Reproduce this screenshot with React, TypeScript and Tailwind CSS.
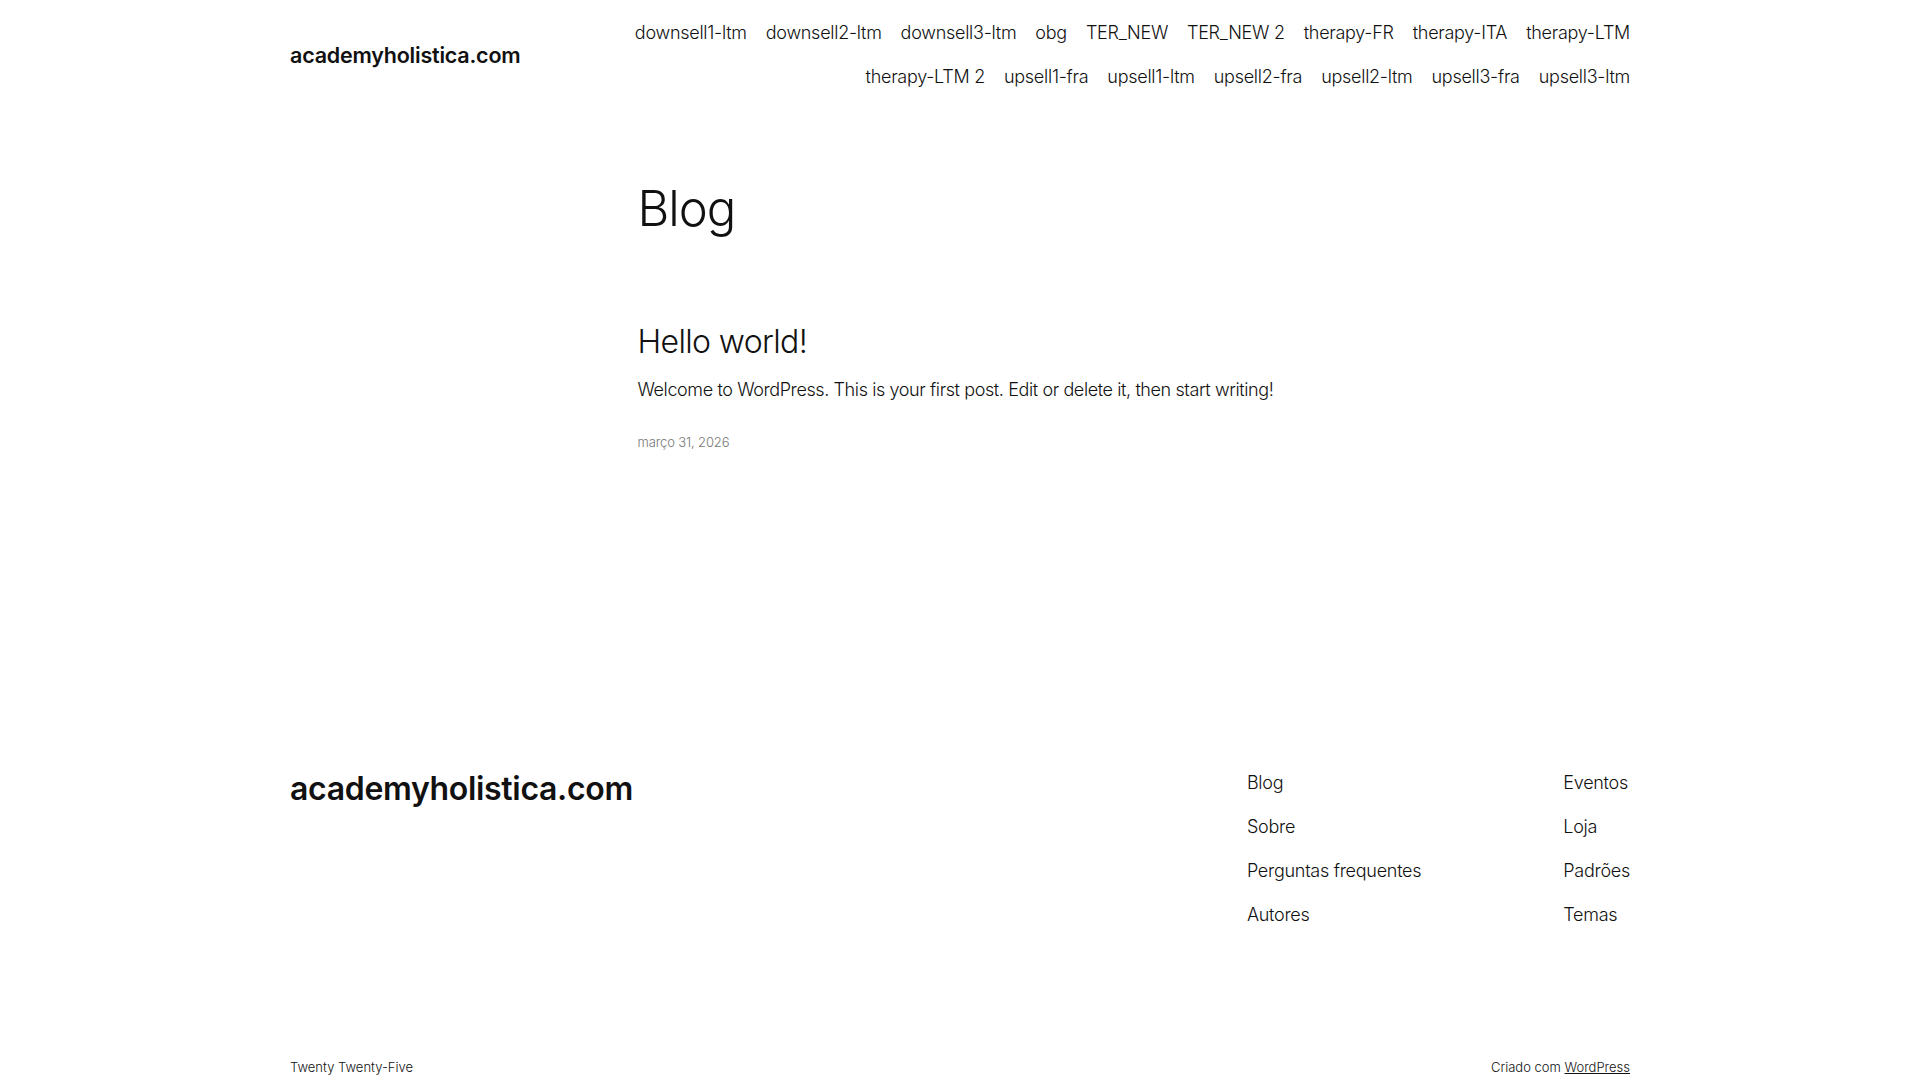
import React from 'react';

const navItems = [
  'downsell1-ltm', 'downsell2-ltm', 'downsell3-ltm', 'obg', 'TER_NEW', 'TER_NEW 2', 'therapy-FR', 'therapy-ITA', 'therapy-LTM',
  'therapy-LTM 2', 'upsell1-fra', 'upsell1-ltm', 'upsell2-fra', 'upsell2-ltm', 'upsell3-fra', 'upsell3-ltm',
];

export default function App() {
  return (
    <div className="min-h-screen bg-white text-[#111111] font-['Inter',sans-serif] flex flex-col">
      {/* header */}
      <header className="mx-auto w-[1340px] flex items-center justify-between pt-[11px]">
        <a href="#" className="text-[21.5px] font-semibold tracking-[-0.01em]">academyholistica.com</a>
        <nav className="w-[1000px] flex flex-wrap justify-end gap-x-[19px] text-[18px] font-light leading-[44px] tracking-[-0.015em]">
          {navItems.map((item) => (
            <a key={item} href="#">{item}</a>
          ))}
        </nav>
      </header>

      {/* main */}
      <main className="mx-auto w-[645px] pt-[81px]">
        <h1 className="text-[49px] font-light leading-[1.2] tracking-[-0.02em]">Blog</h1>
        <article className="mt-[84px]">
          <h2 className="text-[32px] font-light leading-[1.2] tracking-[-0.02em]">Hello world!</h2>
          <p className="mt-[15px] text-[18px] font-light tracking-[-0.022em] whitespace-nowrap">
            Welcome to WordPress. This is your first post. Edit or delete it, then start writing!
          </p>
          <p className="mt-[30px] text-[13px] font-light text-[#777777] tracking-[-0.01em]">março 31, 2026</p>
        </article>
      </main>

      {/* footer */}
      <footer className="mx-auto w-[1340px] mt-[316px]">
        <div className="flex justify-between items-start">
          <a href="#" className="text-[32px] font-semibold tracking-[-0.01em] leading-none mt-[4px]">academyholistica.com</a>
          <div className="flex gap-[142px] text-[18px] font-light leading-[44px] -mt-[8px] tracking-[-0.015em]">
            <div className="flex flex-col">
              <a href="#">Blog</a>
              <a href="#">Sobre</a>
              <a href="#">Perguntas frequentes</a>
              <a href="#">Autores</a>
            </div>
            <div className="flex flex-col">
              <a href="#">Eventos</a>
              <a href="#">Loja</a>
              <a href="#">Padrões</a>
              <a href="#">Temas</a>
            </div>
          </div>
        </div>
        <div className="flex justify-between text-[13px] font-light mt-[121px] pb-[4px]">
          <span>Twenty Twenty-Five</span>
          <span>
            Criado com <a href="#" className="underline">WordPress</a>
          </span>
        </div>
      </footer>
    </div>
  );
}
